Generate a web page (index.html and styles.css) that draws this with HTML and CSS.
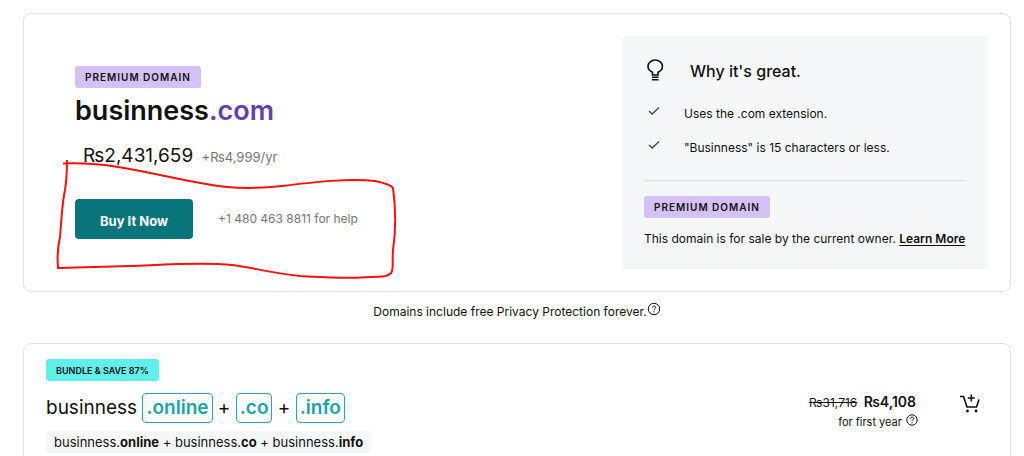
FILE: index.html
```html
<!DOCTYPE html>
<html lang="en">

<head>
    <meta charset="UTF-8" />
    <meta name="viewport" content="width=device-width, initial-scale=1.0" />
    <title>businness.com</title>
    <link rel="stylesheet" href="styles.css">
</head>

<body>
    <section class="card domain">
        <div class="offer">
            <span class="badge premium">PREMIUM DOMAIN</span>
            <h1 class="name">businness<span class="tld">.com</span></h1>
            <p class="price">₨2,431,659 <span class="renewal">+₨4,999/yr</span></p>
            <div class="buy">
                <button class="buy-button" type="button">Buy It Now</button>
                <span class="phone">+1 480 463 8811 for help</span>
                <svg class="marker" width="352" height="130" viewBox="0 0 352 130" aria-hidden="true">
                    <path d="M13 8.500C30 8 50 9 68 12C100 17 125 24 156 29C182 34 205 34 232 31C265 27 300 23 325 26C335 28 341 30 343 33C346 55 346 75 343 95C342 108 344 115 341 118C336 123 330 121 320 122C300 124 270 122 250 121C220 118 200 112 182 110C150 107 110 110 80 111L8 113C7 100 8 90 10 82C12 60 12 48 15 35C17 22 17 14 17 5" />
                </svg>
            </div>
        </div>

        <aside class="panel">
            <div class="panel-head">
                <svg class="bulb" width="24" height="24" viewBox="0 0 24 24" aria-hidden="true">
                    <path d="M8.500 16V13.200C6 12.200 4 10.300 4 7.500A7.200 6.500 0 0 1 18.400 7.500C18.400 10.300 16.500 12.200 14 13.200V16Z" />
                    <path d="M8 18.200H14.500M8 20.800H14.500" />
                </svg>
                <h2 class="panel-title">Why it's great.</h2>
            </div>
            <ul class="reasons">
                <li>
                    <svg class="check" width="12" height="10" viewBox="0 0 12 10" aria-hidden="true"><path d="M1 5L4.200 8L11 1.500" /></svg>
                    Uses the .com extension.
                </li>
                <li>
                    <svg class="check" width="12" height="10" viewBox="0 0 12 10" aria-hidden="true"><path d="M1 5L4.200 8L11 1.500" /></svg>
                    "Businness" is 15 characters or less.
                </li>
            </ul>
            <div class="owner">
                <span class="badge premium">PREMIUM DOMAIN</span>
                <p>This domain is for sale by the current owner. <a href="#">Learn More</a></p>
            </div>
        </aside>
    </section>

    <p class="privacy">Domains include free Privacy Protection forever.<svg class="help" width="14" height="14" viewBox="0 0 14 14" aria-hidden="true">
            <circle cx="7" cy="7" r="5.700" />
            <path d="M5.400 5.700C5.400 3.500 8.700 3.600 8.700 5.500C8.700 6.700 7 6.700 7 8M7 9.200V10.300" />
        </svg></p>

    <section class="card bundle">
        <div>
            <span class="badge save">BUNDLE &amp; SAVE 87%</span>
            <h2 class="bundle-name">businness <b>.online</b> + <b>.co</b> + <b>.info</b></h2>
            <p class="summary">businness.<strong>online</strong> + businness.<strong>co</strong> + businness.<strong>info</strong></p>
        </div>
        <div class="checkout">
            <div class="bundle-price">
                <p class="now"><s>₨31,716</s> <strong>₨4,108</strong></p>
                <p class="term">for first year <svg class="help" width="14" height="14" viewBox="0 0 14 14" aria-hidden="true">
                        <circle cx="7" cy="7" r="5.200" />
                        <path d="M5.400 5.700C5.400 3.500 8.700 3.600 8.700 5.500C8.700 6.700 7 6.700 7 8M7 9.200V10.300" />
                    </svg></p>
            </div>
            <button class="cart" type="button" aria-label="Add to cart">
                <svg width="20" height="20" viewBox="0 0 20 20" aria-hidden="true">
                    <path d="M0 2.500H3.500L7 13H16.500L19 5.500M11.300 0.500V7.500M7.800 4H14.800" />
                    <circle cx="7.500" cy="17" r="1.400" />
                    <circle cx="16" cy="17" r="1.400" />
                </svg>
            </button>
        </div>
    </section>
</body>

</html>
```
FILE: styles.css
```css
* {
    box-sizing: border-box;
}

body {
    margin: 0;
    padding: 13px 13px 0 23px;
    font-family: Inter, "Liberation Sans", sans-serif;
    font-size: 12px;
    line-height: 20px;
    color: #111;
    background: #fff;
}

h1,
h2,
p,
ul {
    margin: 0;
    padding: 0;
    font-weight: 400;
}

svg {
    fill: none;
    stroke: currentColor;
}

.card {
    display: flex;
    justify-content: space-between;
    border: 1px solid #dfe3e8;
    border-radius: 8px;
}

.domain {
    padding: 22px;
}

.offer {
    padding: 30px 0 0 29px;
}

.badge {
    display: block;
    width: fit-content;
    height: 22px;
    padding: 0 8px;
    border-radius: 3px;
    line-height: 23px;
    font-weight: 600;
}

.premium {
    padding: 0 10px;
    background: #d3c1f7;
    font-size: 10px;
    letter-spacing: 1px;
}

.name {
    margin-top: 5px;
    font-size: 27px;
    line-height: 36px;
    font-weight: 600;
}

.tld {
    color: #6640a5;
}

.price {
    margin: 13px 0 0 8px;
    font-size: 19px;
    line-height: 28px;
}

.renewal {
    margin-left: 3px;
    font-size: 13px;
    color: #767676;
}

.buy {
    position: relative;
    display: flex;
    align-items: center;
    gap: 25px;
    margin-top: 28px;
}

.buy-button {
    height: 40px;
    padding: 3px 25px 0;
    border: none;
    border-radius: 4px;
    background: #09757a;
    color: #fff;
    font: inherit;
    font-size: 13px;
    font-weight: 700;
    cursor: pointer;
}

.phone {
    color: #767676;
}

/* hand-drawn outline over the buy row */
.marker {
    position: absolute;
    top: -44px;
    left: -25px;
    stroke: #fb1010;
    stroke-width: 2;
    pointer-events: none;
}

.panel {
    min-width: 366px;
    padding: 22px 22px 20px;
    border-radius: 4px;
    background: #f5f7f8;
}

.panel-head {
    display: flex;
    align-items: center;
    gap: 22px;
}

.bulb {
    stroke-width: 1.6;
}

.panel-title {
    font-size: 16px;
    line-height: 26px;
    font-weight: 500;
}

.reasons {
    display: grid;
    gap: 14px;
    margin: 20px 0 22px 4px;
    list-style: none;
}

.reasons li {
    display: flex;
    align-items: flex-start;
    gap: 24px;
}

.check {
    margin-top: 2px;
    color: #444;
    stroke-width: 1.3;
}

.owner {
    padding-top: 15px;
    border-top: 1px solid #d9dcdf;
}

.owner p {
    margin-top: 11px;
}

.owner a {
    color: inherit;
    font-weight: 600;
    text-underline-offset: 2px;
}

.privacy {
    margin: 10px 0 21px;
    text-align: center;
}

.help {
    vertical-align: -1px;
}

.privacy .help {
    vertical-align: 0;
}

.bundle {
    padding: 15px 22px 24px;
}

.save {
    padding: 0 10px;
    background: #60efea;
    font-size: 9px;
}

.bundle-name {
    margin-top: 11px;
    font-size: 19px;
    line-height: 32px;
}

.bundle-name b {
    display: inline-block;
    padding: 0 3px;
    border: 1px solid #26aaa9;
    border-radius: 4px;
    line-height: 28px;
    font-weight: 600;
    color: #1ba6a6;
}

.summary {
    width: fit-content;
    margin-top: 7px;
    padding: 1px 8px;
    border-radius: 3px;
    background: #f5f7f8;
    font-size: 13px;
}

.checkout {
    display: flex;
    align-items: flex-start;
    gap: 41px;
    padding: 33px 8px 0 0;
}

.bundle-price {
    text-align: right;
}

.now {
    padding-right: 3px;
}

.now strong {
    margin-left: 3px;
    font-size: 14px;
    font-weight: 600;
}

.term {
    font-size: 11px;
    line-height: 16px;
}

.cart {
    padding: 2px 0;
    border: none;
    background: none;
    color: inherit;
    cursor: pointer;
}

.cart svg {
    display: block;
    stroke-width: 1.6;
}

.cart circle {
    fill: currentColor;
    stroke: none;
}
```
